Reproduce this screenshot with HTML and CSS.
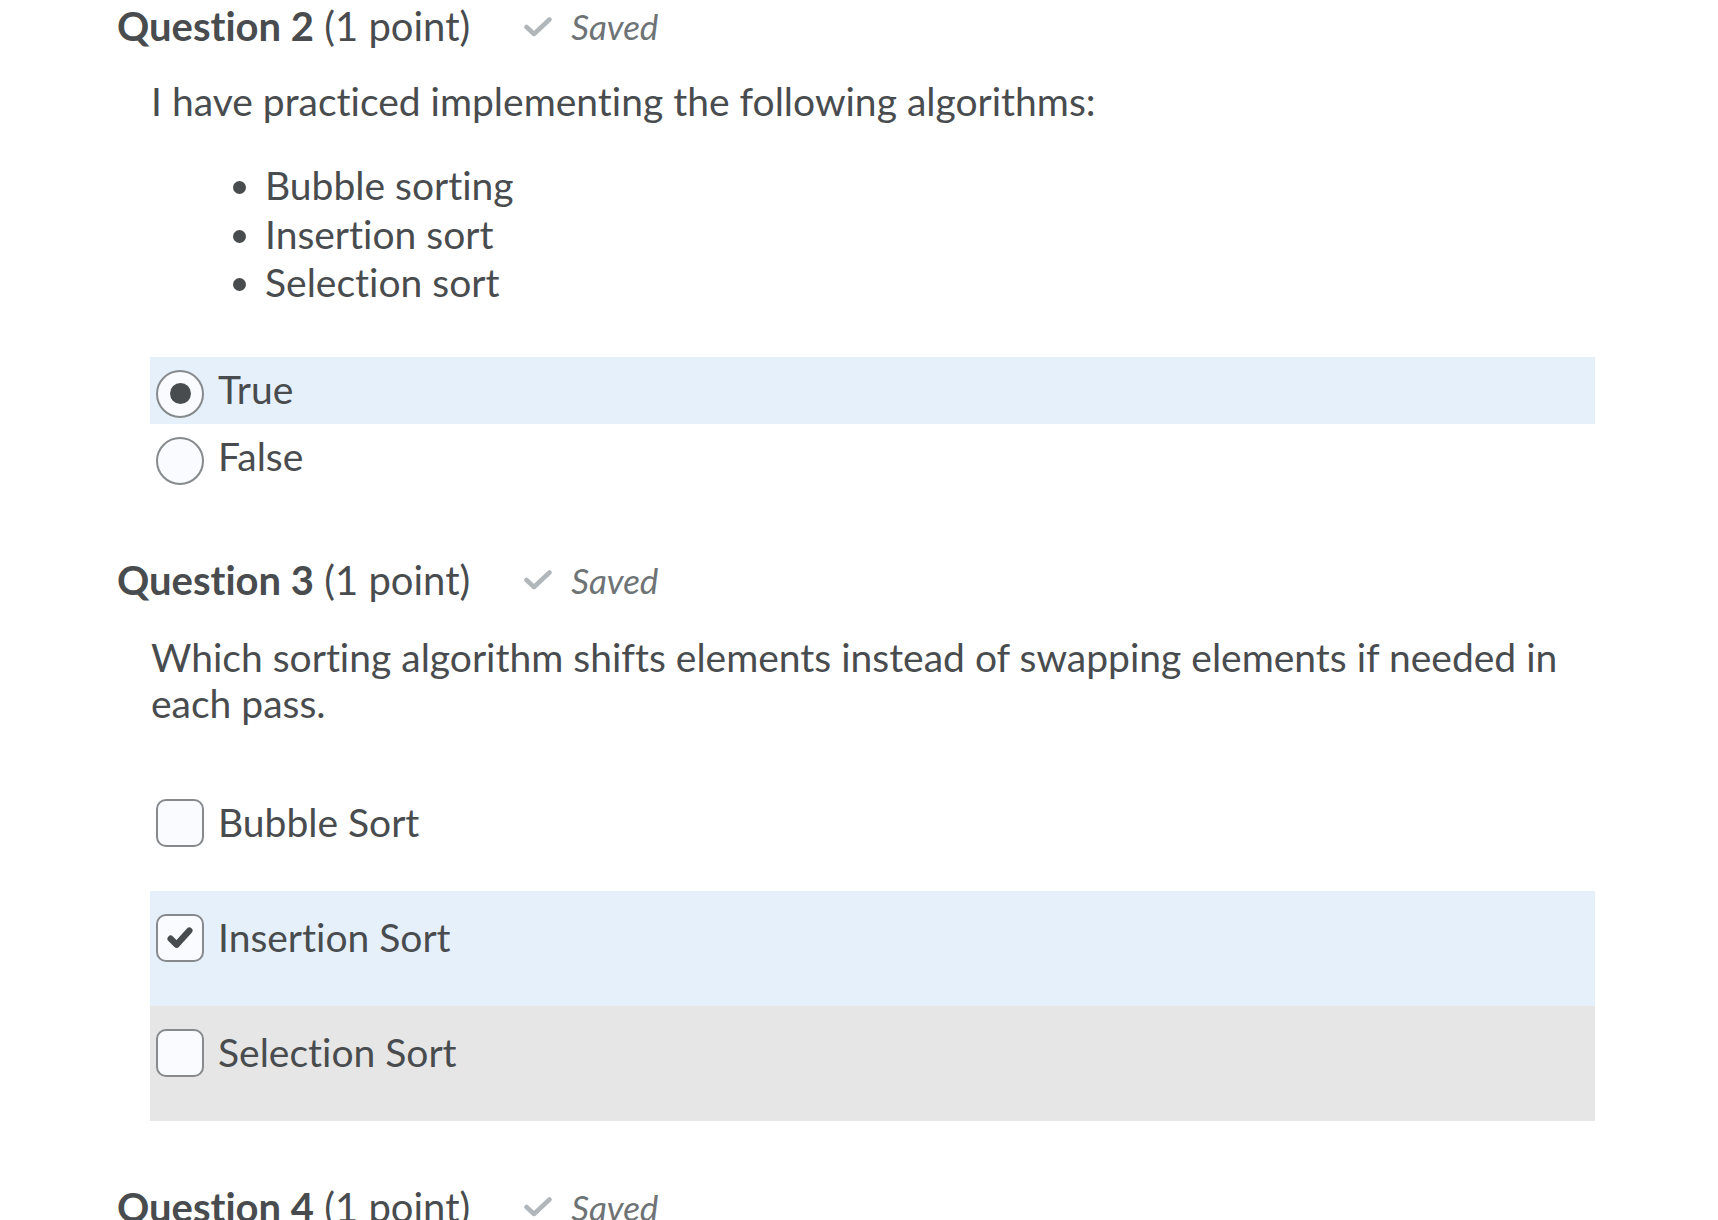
FILE: index.html
```html
<!DOCTYPE html>
<html lang="en">
<head>
<meta charset="utf-8">
<title>Quiz</title>
<link rel="stylesheet" href="styles.css">
</head>
<body>
<main class="quiz">
  <section class="question">
    <div class="q-head">
      <h2 class="q-title"><strong>Question 2</strong> (1 point)</h2>
      <span class="saved">
        <svg class="saved-icon" viewBox="0 0 28 20" aria-hidden="true"><polyline points="2.5,10 10,17 25.5,2.5" /></svg>
        <em>Saved</em>
      </span>
    </div>
    <div class="q-text">
      <p>I have practiced implementing the following algorithms:</p>
      <ul class="q-list">
        <li>Bubble sorting</li>
        <li>Insertion sort</li>
        <li>Selection sort</li>
      </ul>
    </div>
    <div class="options radios">
      <label class="opt opt-radio selected">
        <span class="radio checked"><span class="dot"></span></span>
        <span class="opt-label">True</span>
      </label>
      <label class="opt opt-radio">
        <span class="radio"></span>
        <span class="opt-label">False</span>
      </label>
    </div>
  </section>

  <section class="question q3">
    <div class="q-head">
      <h2 class="q-title"><strong>Question 3</strong> (1 point)</h2>
      <span class="saved">
        <svg class="saved-icon" viewBox="0 0 28 20" aria-hidden="true"><polyline points="2.5,10 10,17 25.5,2.5" /></svg>
        <em>Saved</em>
      </span>
    </div>
    <div class="q-text">
      <p class="wrap">Which sorting algorithm shifts elements instead of swapping elements if needed in each pass.</p>
    </div>
    <div class="options checks">
      <label class="opt opt-check">
        <span class="box"></span>
        <span class="opt-label">Bubble Sort</span>
      </label>
      <label class="opt opt-check selected">
        <span class="box">
          <svg class="tick" viewBox="0 0 24 24" aria-hidden="true"><polyline points="5,12.5 9.5,17 19,6.5" /></svg>
        </span>
        <span class="opt-label">Insertion Sort</span>
      </label>
      <label class="opt opt-check hover">
        <span class="box"></span>
        <span class="opt-label">Selection Sort</span>
      </label>
    </div>
  </section>

  <section class="question q4">
    <div class="q-head">
      <h2 class="q-title"><strong>Question 4</strong> (1 point)</h2>
      <span class="saved">
        <svg class="saved-icon" viewBox="0 0 28 20" aria-hidden="true"><polyline points="2.5,10 10,17 25.5,2.5" /></svg>
        <em>Saved</em>
      </span>
    </div>
  </section>
</main>
</body>
</html>
```

FILE: styles.css
```css
html, body {
  margin: 0;
  padding: 0;
  background: #ffffff;
}

body {
  font-family: Lato, "Open Sans", "Liberation Sans", sans-serif;
  font-variant-ligatures: none;
  color: #494c4e;
  font-size: 39px;
  line-height: 47px;
  overflow: hidden;
}

.quiz {
  padding: 3px 0 0 117px;
}

.q-head {
  display: flex;
  align-items: center;
  height: 47px;
}

.q-title {
  margin: 0;
  font-size: 40px;
  font-weight: 400;
  line-height: 47px;
}

.q-title strong {
  font-weight: 700;
}

.saved {
  display: flex;
  align-items: center;
  margin-left: 54px;
  color: #6e7376;
  font-size: 35px;
}

.saved-icon {
  width: 28px;
  height: 20px;
  margin-right: 19px;
  fill: none;
  stroke: #b1b6ba;
  stroke-width: 4.5;
  stroke-linecap: round;
  stroke-linejoin: round;
}

.saved em {
  font-style: italic;
}

.q-text {
  margin-left: 34px;
  width: 1445px;
}

.q-text p {
  margin: 28px 0 0;
}

.q-text p.wrap {
  margin-top: 30px;
  line-height: 46px;
}

.q-list {
  margin: 36px 0 0;
  padding-left: 114px;
  line-height: 48.5px;
}

.options {
  margin-left: 33px;
  width: 1445px;
}

.radios {
  margin-top: 50px;
}

.opt {
  display: flex;
  align-items: flex-start;
  padding-left: 6px;
  box-sizing: border-box;
}

.opt-radio {
  height: 67px;
  padding-top: 13px;
}

.opt-check {
  height: 115px;
  padding-top: 23px;
}

.opt.selected {
  background: #e6f0fb;
}

.opt.hover {
  background: #e6e6e6;
}

.radio {
  width: 48px;
  height: 48px;
  box-sizing: border-box;
  border: 2px solid #868a8d;
  border-radius: 50%;
  background: #f9fbff;
  display: flex;
  align-items: center;
  justify-content: center;
  flex: none;
}

.dot {
  width: 21px;
  height: 21px;
  border-radius: 50%;
  background: #494c4e;
}

.box {
  width: 48px;
  height: 48px;
  box-sizing: border-box;
  border: 2px solid #868a8d;
  border-radius: 10px;
  background: #f9fbff;
  display: flex;
  align-items: center;
  justify-content: center;
  flex: none;
}

.tick {
  width: 32px;
  height: 32px;
  fill: none;
  stroke: #494c4e;
  stroke-width: 4.8;
  stroke-linecap: round;
  stroke-linejoin: round;
}

.opt-label {
  margin-left: 14px;
  line-height: 47px;
}

.opt-radio .opt-label {
  margin-top: -4px;
}

.q3 {
  margin-top: 66px;
}

.checks {
  margin-top: 50px;
}

.q4 {
  margin-top: 63px;
}
```
